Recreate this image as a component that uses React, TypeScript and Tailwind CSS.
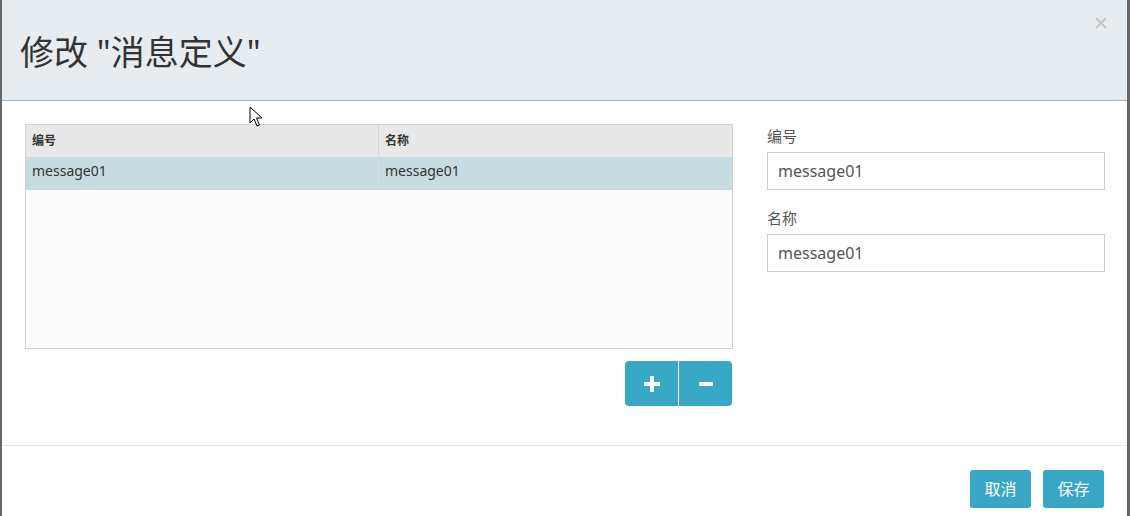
const font = {
  fontFamily: '"Noto Sans", "Noto Sans CJK SC", sans-serif',
};

function Cursor() {
  return (
    <svg
      className="absolute left-[247px] top-[106px]"
      width="16"
      height="22"
      viewBox="0 0 16 22"
    >
      <path
        d="M1 1 L1 17 L5 13 L8 20 L10.5 19 L7.5 12 L13 12 Z"
        fill="#fff"
        stroke="#000"
        strokeWidth="1"
        strokeLinejoin="round"
      />
    </svg>
  );
}

function Field({ label, value }: { label: string; value: string }) {
  return (
    <div>
      <label className="block text-[15px] leading-[20px] text-[#555]">
        {label}
      </label>
      <div className="mt-[6px] h-[38px] border border-[#ccc] bg-white px-[10px] flex items-center text-[16px] text-[#555]">
        {value}
      </div>
    </div>
  );
}

export default function App() {
  return (
    <div className="w-[1130px] h-[516px] bg-[#666] pl-[2px] pr-[3px] overflow-hidden" style={font}>
      <div className="relative h-full bg-white flex flex-col">
        {/* header */}
        <div className="h-[101px] shrink-0 bg-[#e7ecf0] border-b border-[#a9b5c3] relative">
          <h4 className="pl-[18px] pt-[30px] text-[34px] leading-[44px] text-[#333]">
            修改 "消息定义"
          </h4>
          <svg
            className="absolute right-[20px] top-[17px]"
            width="12"
            height="12"
            viewBox="0 0 12 12"
          >
            <path d="M1 1L11 11M11 1L1 11" stroke="#c4c4c4" strokeWidth="2" />
          </svg>
        </div>

        {/* body */}
        <div className="flex gap-[34px] pl-[23px] pt-[23px] h-[345px] shrink-0 border-b border-[#e5e5e5]">
          <div className="w-[708px]">
            <div className="h-[225px] border border-[#d3d3d3] bg-[#fcfcfc]">
              <div className="flex h-[32px] bg-[#e8e8e8] text-[12px] font-bold text-[#333]">
                <div className="w-[353px] border-r border-[#d6d6d6] pl-[6px] flex items-center">
                  编号
                </div>
                <div className="flex-1 pl-[6px] flex items-center">名称</div>
              </div>
              <div className="flex h-[33px] bg-[#c7dce0] text-[14px] text-[#333]">
                <div className="w-[353px] border-r border-[#d3dfe2] pl-[6px] pt-[3px]">
                  message01
                </div>
                <div className="flex-1 pl-[6px] pt-[3px]">message01</div>
              </div>
            </div>
            <div className="flex justify-end mt-[12px] pr-[1px]">
              <div className="flex h-[45px] rounded-[4px] overflow-hidden bg-[#38a7c6] text-white">
                <button className="w-[54px] flex items-center justify-center border-r border-white">
                  <svg width="18" height="18" viewBox="0 0 18 18">
                    <path d="M7 1h4v6h6v4h-6v6H7v-6H1V7h6z" fill="#fff" />
                  </svg>
                </button>
                <button className="w-[53px] flex items-center justify-center">
                  <svg width="14" height="4" viewBox="0 0 14 4">
                    <rect width="14" height="4" fill="#fff" />
                  </svg>
                </button>
              </div>
            </div>
          </div>
          <div className="w-[338px] flex flex-col gap-[18px] pt-[2px]">
            <Field label="编号" value="message01" />
            <Field label="名称" value="message01" />
          </div>
        </div>

        {/* footer */}
        <div className="flex justify-end gap-[12px] pr-[23px] pt-[24px]">
          <button className="h-[38px] w-[61px] rounded-[3px] bg-[#38a7c6] text-white text-[16px]">
            取消
          </button>
          <button className="h-[38px] w-[61px] rounded-[3px] bg-[#38a7c6] text-white text-[16px]">
            保存
          </button>
        </div>

        <Cursor />
      </div>
    </div>
  );
}
